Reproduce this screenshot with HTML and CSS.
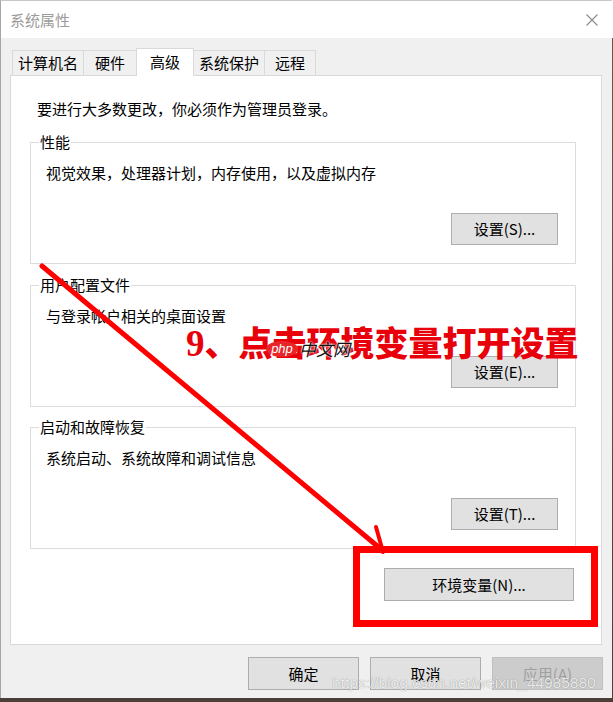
FILE: index.html
```html
<!DOCTYPE html>
<html lang="zh-CN">
<head>
<meta charset="utf-8">
<title>系统属性</title>
<link rel="stylesheet" href="styles.css">
</head>
<body>
<div class="desktop">
  <div class="window">
    <div class="titlebar">
      <span class="title">系统属性</span>
      <svg class="close" width="12" height="12" viewBox="0 0 12 12"><path d="M0.5 0.5 L11.5 11.5 M11.5 0.5 L0.5 11.5" stroke="#8a8a8a" stroke-width="1.1" fill="none"/></svg>
    </div>
    <div class="client">
      <div class="tabs">
        <div class="tab t1">计算机名</div>
        <div class="tab t2">硬件</div>
        <div class="tab t3 active">高级</div>
        <div class="tab t4">系统保护</div>
        <div class="tab t5">远程</div>
      </div>
      <div class="panel">
        <p class="intro">要进行大多数更改，你必须作为管理员登录。</p>
        <section class="group">
          <span class="legend">性能</span>
          <p class="desc">视觉效果，处理器计划，内存使用，以及虚拟内存</p>
          <div class="row"><button class="btn set">设置(S)...</button></div>
        </section>
        <section class="group">
          <span class="legend">用户配置文件</span>
          <p class="desc">与登录帐户相关的桌面设置</p>
          <div class="row"><button class="btn set">设置(E)...</button></div>
        </section>
        <section class="group g3">
          <span class="legend">启动和故障恢复</span>
          <p class="desc">系统启动、系统故障和调试信息</p>
          <div class="row"><button class="btn set">设置(T)...</button></div>
        </section>
        <div class="envrow"><button class="btn env">环境变量(N)...</button></div>
      </div>
      <div class="footer">
        <button class="btn foot">确定</button>
        <button class="btn foot">取消</button>
        <button class="btn foot disabled">应用(A)</button>
      </div>
    </div>
  </div>

  <div class="annot">
    <svg class="marks" width="613" height="702" viewBox="0 0 613 702">
      <line x1="42" y1="266" x2="382" y2="550" stroke="#ff0000" stroke-width="5" stroke-linecap="round"/>
      <line x1="376" y1="527" x2="383" y2="552" stroke="#ff0000" stroke-width="4" stroke-linecap="round"/>
      <rect x="356.5" y="549.5" width="238" height="74" fill="none" stroke="#ff0000" stroke-width="7"/>
    </svg>
    <div class="note"><span class="num">9</span>、点击环境变量打开设置</div>
    <div class="logo"><span class="php">php</span><span class="cn">中文网</span></div>
    <div class="wm">https://blog.csdn.net/weixin_44985880</div>
  </div>
</div>
</body>
</html>
```

FILE: styles.css
```css
html, body {
  margin: 0;
  padding: 0;
  background: #3b3530;
}

.desktop {
  position: relative;
  width: 613px;
  height: 702px;
  overflow: hidden;
  background: linear-gradient(to bottom, #ffffff 0, #ffffff 38px, #6b5840 38px, #4a4038 100%);
}

.window {
  width: 612px;
  height: 698px;
  box-sizing: border-box;
  border-left: 1px solid #a6a6a6;
  border-top: 1px solid #c8c8c8;
  display: flex;
  flex-direction: column;
  font-family: "Noto Sans CJK SC", "Noto Sans", sans-serif;
  font-size: 15px;
  color: #000;
  background: #f0f0f0;
}

.titlebar {
  height: 37px;
  flex: none;
  background: #ffffff;
  display: flex;
  align-items: center;
  justify-content: space-between;
  padding: 0 14px 0 9px;
}

.title {
  color: #9b9b9b;
  font-size: 15px;
  line-height: 20px;
}

.close {
  display: block;
}

.client {
  flex: 1;
  display: flex;
  flex-direction: column;
  padding: 10px 10px 0 9px;
}

.tabs {
  display: flex;
  align-items: flex-end;
  height: 27px;
  padding-left: 2px;
}

.tab {
  box-sizing: border-box;
  height: 25px;
  border: 1px solid #d9d9d9;
  border-bottom: none;
  background: #f0f0f0;
  display: flex;
  align-items: center;
  justify-content: center;
  line-height: 20px;
  margin-left: -1px;
}

.t1 { width: 72px; margin-left: 0; }
.t2 { width: 54px; }
.t3 { width: 58px; }
.t4 { width: 72px; }
.t5 { width: 52px; }

.tab.active {
  height: 28px;
  background: #ffffff;
  margin-bottom: -1px;
  position: relative;
  z-index: 1;
  padding-bottom: 2px;
}

.panel {
  box-sizing: border-box;
  height: 570px;
  background: #ffffff;
  border: 1px solid #d9d9d9;
  padding: 23px 0 0 19px;
}

.intro {
  margin: 0;
  padding-left: 7px;
  line-height: 20px;
}

.group {
  position: relative;
  box-sizing: border-box;
  width: 546px;
  height: 122px;
  border: 1px solid #dcdcdc;
  margin-top: 21px;
  padding: 20px 17px 0 15px;
}

.panel .intro + .group {
  margin-top: 23px;
}

.group.g3 {
  margin-top: 20px;
}

.legend {
  position: absolute;
  top: -11px;
  left: 8px;
  background: #ffffff;
  padding: 0 1px;
  line-height: 20px;
}

.desc {
  margin: 0;
  line-height: 20px;
}

.row {
  display: flex;
  justify-content: flex-end;
  margin-top: 30px;
}

.btn {
  box-sizing: border-box;
  font-family: "Noto Sans CJK SC", "Noto Sans", sans-serif;
  font-size: 15px;
  color: #000;
  background: #e1e1e1;
  border: 1px solid #adadad;
  border-radius: 0;
  padding: 0;
  line-height: 20px;
  display: flex;
  align-items: center;
  justify-content: center;
}

.set {
  width: 107px;
  height: 32px;
}

.envrow {
  display: flex;
  justify-content: flex-end;
  margin-top: 19px;
  padding-right: 27px;
}

.env {
  width: 190px;
  height: 33px;
}

.footer {
  display: flex;
  justify-content: flex-end;
  gap: 11px;
  margin-top: 12px;
  margin-right: -1px;
}

.foot {
  width: 111px;
  height: 33px;
}

.foot.disabled {
  background: #cccccc;
  border-color: #bfbfbf;
  color: #a0a0a0;
}

/* annotation layer drawn over the screenshot */
.annot {
  position: absolute;
  inset: 0;
  pointer-events: none;
}

.marks {
  position: absolute;
  left: 0;
  top: 0;
}

.note {
  position: absolute;
  left: 186px;
  top: 323px;
  font-family: "Noto Sans CJK SC", sans-serif;
  font-weight: 900;
  font-size: 34px;
  line-height: 38px;
  color: #e8000a;
  white-space: nowrap;
}

.note .num {
  font-family: "Liberation Serif", serif;
  font-weight: 700;
  font-size: 37px;
}

.logo {
  position: absolute;
  left: 266px;
  top: 340px;
  display: flex;
  align-items: center;
  white-space: nowrap;
}

.php {
  display: inline-block;
  width: 32px;
  height: 16px;
  border-radius: 50%;
  background: #e8262a;
  color: #ffffff;
  font-family: "Liberation Sans", sans-serif;
  font-style: italic;
  font-size: 13px;
  line-height: 15px;
  text-align: center;
}

.cn {
  margin-left: 1px;
  font-family: "Noto Sans CJK SC", sans-serif;
  font-size: 17px;
  line-height: 18px;
  font-style: italic;
  color: #111;
  text-shadow: 0 0 2px #fff, 0 0 2px #fff;
}

.wm {
  position: absolute;
  left: 332px;
  top: 673px;
  font-family: "Liberation Sans", sans-serif;
  font-size: 15.5px;
  line-height: 20px;
  color: rgba(255, 255, 255, 0.85);
  text-shadow: 0 0 1px rgba(0, 0, 0, 0.45);
  white-space: nowrap;
}
```
